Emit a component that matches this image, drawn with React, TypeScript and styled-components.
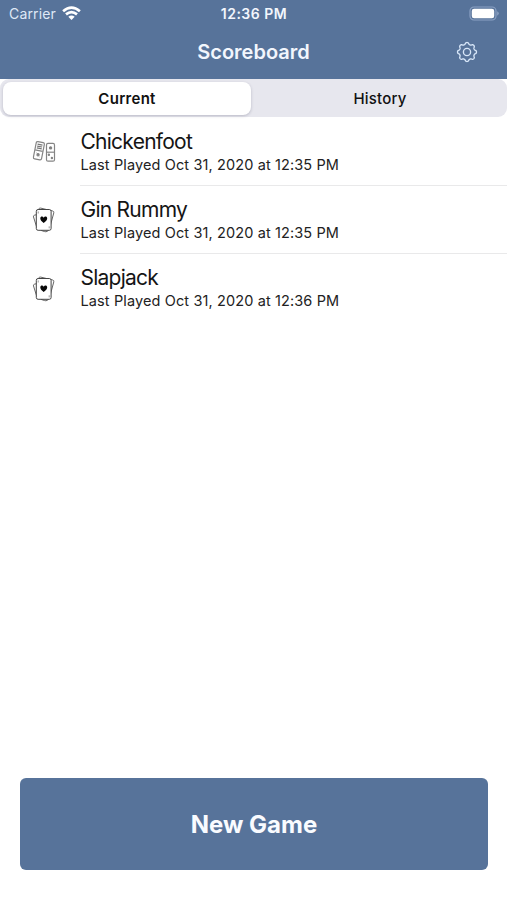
import React from "react";
import styled, { createGlobalStyle } from "styled-components";

const blue = "#57739a";

const GlobalStyle = createGlobalStyle`
  * { box-sizing: border-box; }
  body { margin: 0; background: #fff; font-family: Inter, "Liberation Sans", sans-serif; }
`;

const Screen = styled.div`
  width: 507px;
  height: 900px;
  display: flex;
  flex-direction: column;
  background: #fff;
  overflow: hidden;
`;

const Header = styled.header`
  height: 79px;
  background: ${blue};
  color: #fff;
  flex: none;
`;

const StatusBar = styled.div`
  height: 27px;
  display: grid;
  grid-template-columns: 1fr auto 1fr;
  align-items: center;
  padding: 0 8px 0 9px;
  color: #f2f6fd;
`;

const Carrier = styled.div`
  display: flex;
  align-items: center;
  gap: 6px;
  font-size: 14px;
  line-height: 20px;
  letter-spacing: 0.15px;
  color: #dfe8f6;
`;

const Clock = styled.div`
  font-size: 14px;
  line-height: 20px;
  font-weight: 600;
  letter-spacing: 0.5px;
`;

const BatterySlot = styled.div`
  display: flex;
  justify-content: flex-end;
`;

const NavBar = styled.div`
  height: 50px;
  display: grid;
  grid-template-columns: 1fr auto 1fr;
  align-items: center;
  padding: 0 29px;
`;

const Title = styled.h1`
  grid-column: 2;
  margin: 0;
  font-size: 20px;
  line-height: 28px;
  font-weight: 600;
  color: #f2f6fd;
`;

const SettingsButton = styled.button`
  justify-self: end;
  display: flex;
  padding: 0;
  border: 0;
  background: none;
  color: #d7e6f8;
`;

const Segments = styled.div`
  height: 38px;
  flex: none;
  display: grid;
  grid-template-columns: 248px 1fr;
  padding: 3px 0 2px 3px;
  background: #e7e7ee;
  border-radius: 9px;
`;

const Segment = styled.button<{ $active?: boolean }>`
  border: 0;
  padding: ${(p) => (p.$active ? "0" : "0 0 0 2px")};
  font-family: inherit;
  font-size: 15px;
  line-height: 20px;
  font-weight: ${(p) => (p.$active ? 600 : 500)};
  letter-spacing: ${(p) => (p.$active ? "0.3px" : "0.2px")};
  color: #111;
  border-radius: 8px;
  background: ${(p) => (p.$active ? "#fff" : "transparent")};
  box-shadow: ${(p) => (p.$active ? "0 1px 3px rgba(40, 40, 70, 0.24)" : "none")};
`;

const GameList = styled.ul`
  margin: 0;
  padding: 0.6px 0 0;
  list-style: none;
  flex: 1;
`;

const GameRow = styled.li`
  display: grid;
  grid-template-columns: 80px 1fr;
  height: 68.4px;
`;

const IconCell = styled.div`
  display: flex;
  align-items: center;
  padding-left: 32px;
`;

const GameText = styled.div<{ $last?: boolean }>`
  padding: 10px 0 0 0.5px;
  border-bottom: 1px solid ${(p) => (p.$last ? "transparent" : "#e9e9ea")};
`;

const GameName = styled.div`
  font-size: 21px;
  line-height: 28px;
  letter-spacing: -0.75px;
  color: #151515;
`;

const Played = styled.div`
  font-size: 14.5px;
  line-height: 18px;
  letter-spacing: 0.12px;
  color: #222;
`;

const Footer = styled.footer`
  padding: 0 19px 30px 20px;
`;

const NewGame = styled.button`
  display: block;
  width: 100%;
  height: 92px;
  border: 0;
  border-radius: 6px;
  background: ${blue};
  color: #f9fbff;
  font-family: inherit;
  font-size: 24px;
  font-weight: 700;
`;

const Wifi = () => (
  <svg width="19" height="15" viewBox="0 0 19 15" fill="none" stroke="#fff" strokeWidth="2.7">
    <path d="M1.1 5.2Q9.5-1.9 17.9 5.2" />
    <path d="M4 8.4Q9.5 3.8 15 8.4" />
    <path d="M9.5 14 6.3 10.8Q9.5 8 12.7 10.8Z" fill="#fff" stroke="none" />
  </svg>
);

const Battery = () => (
  <svg width="30" height="15" viewBox="0 0 30 15">
    <rect x="1" y="1" width="26" height="13" rx="4" fill="none" stroke="#8ba1c3" strokeWidth="1.2" />
    <rect x="2.8" y="2.8" width="22.4" height="9.4" rx="2.3" fill="#fff" />
    <path d="M28.4 5.3Q30.8 7.5 28.4 9.7Z" fill="#9eb1cf" />
  </svg>
);

const gearPath = (() => {
  const points: string[] = [];
  for (let i = 0; i <= 128; i++) {
    const a = (i / 128) * Math.PI * 2;
    const wave = Math.cos(a * 8);
    const r = 8.6 + 0.95 * Math.tanh(wave * 1.6);
    points.push(`${(11 + r * Math.sin(a)).toFixed(2)} ${(11 - r * Math.cos(a)).toFixed(2)}`);
  }
  return `M${points.join("L")}Z`;
})();

const Gear = () => (
  <svg width="22" height="22" viewBox="0 0 22 22" fill="none" stroke="currentColor" strokeWidth="1.35" strokeLinejoin="round">
    <path d={gearPath} />
    <circle cx="11" cy="11" r="3.6" />
  </svg>
);

const Dominoes = () => (
  <svg width="24" height="24" viewBox="0 0 24 24" fill="none" stroke="#858585" strokeWidth="1.2">
    <g transform="rotate(11 7 11)">
      <rect x="2.7" y="2" width="8.3" height="17.6" rx="1.5" fill="#fff" />
      <path d="M3 10.7h7.7" />
      <path d="M4.3 4.6h5M4.3 6.5h5M4.3 8.4h5" stroke="#777" />
      <circle cx="6.8" cy="14.9" r="1.1" fill="#777" />
      <path d="M4.7 13.1h.4M8.6 16.8h.4" stroke="#aaa" />
    </g>
    <rect x="14.5" y="3.4" width="8" height="17.8" rx="1.5" fill="#fff" />
    <path d="M14.9 12.2h7.4" />
    <circle cx="18.6" cy="7.9" r="1.1" fill="#777" />
    <circle cx="16.9" cy="14.8" r=".6" fill="#555" />
    <circle cx="19.9" cy="18" r=".6" fill="#555" />
  </svg>
);

const Cards = () => (
  <svg width="24" height="26" viewBox="0 0 24 26" fill="none" strokeWidth="1">
    <path d="M5 7.5 2.2 8.3Q1.1 8.7 1.5 9.9L5.1 21.5Q5.5 22.5 6.5 22.2" fill="#fff" stroke="#666" />
    <path d="M6 3 7.2 1.4Q7.8.9 8.7 1.1L20.7 4Q22.1 4.4 21.8 5.8L18.5 18" fill="#fff" stroke="#666" />
    <path d="M9 23.4 12.7 24.6Q14 25 15 24.4L16.5 23.4" stroke="#666" />
    <rect x="4.3" y="2.5" width="14.8" height="20.8" rx="1.8" fill="#fff" stroke="#444" />
    <path d="M6.2 4.4v2.1M17.2 19.3v2.1" stroke="#999" />
    <path d="M11.7 16.1C9.5 14.2 8.3 13 8.3 11.5c0-2.2 2.5-2.5 3.4-.8.9-1.7 3.5-1.4 3.5.8 0 1.5-1.3 2.7-3.5 4.6Z" fill="#080808" />
  </svg>
);

const games = [
  { name: "Chickenfoot", time: "12:35 PM", Icon: Dominoes },
  { name: "Gin Rummy", time: "12:35 PM", Icon: Cards },
  { name: "Slapjack", time: "12:36 PM", Icon: Cards },
];

export default function App() {
  return (
    <>
      <GlobalStyle />
      <Screen>
        <Header>
          <StatusBar>
            <Carrier>Carrier <Wifi /></Carrier>
            <Clock>12:36 PM</Clock>
            <BatterySlot><Battery /></BatterySlot>
          </StatusBar>
          <NavBar>
            <Title>Scoreboard</Title>
            <SettingsButton aria-label="Settings"><Gear /></SettingsButton>
          </NavBar>
        </Header>
        <Segments>
          <Segment $active>Current</Segment>
          <Segment>History</Segment>
        </Segments>
        <GameList>
          {games.map(({ name, time, Icon }, i) => (
            <GameRow key={name}>
              <IconCell><Icon /></IconCell>
              <GameText $last={i === games.length - 1}>
                <GameName>{name}</GameName>
                <Played>Last Played Oct 31, 2020 at {time}</Played>
              </GameText>
            </GameRow>
          ))}
        </GameList>
        <Footer><NewGame>New Game</NewGame></Footer>
      </Screen>
    </>
  );
}
